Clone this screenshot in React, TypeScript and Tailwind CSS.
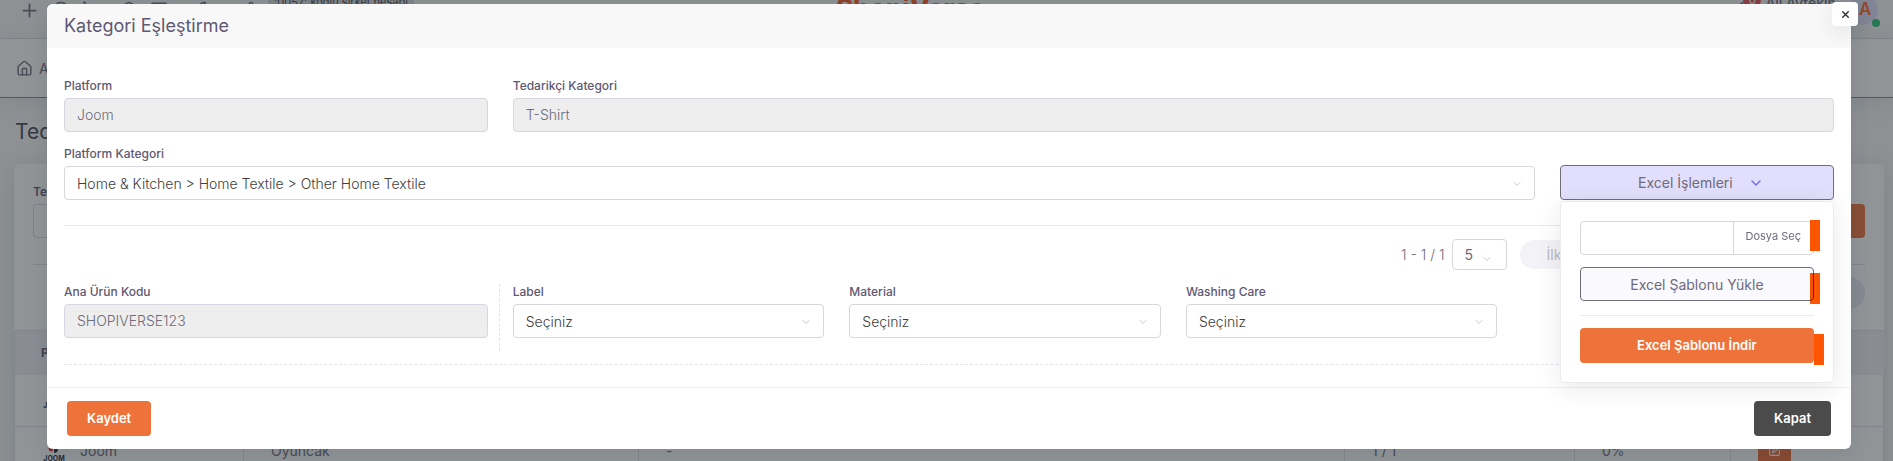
import type { ReactNode } from "react";
import {
  Bell,
  ChevronDown,
  CircleUser,
  Home,
  Monitor,
  Package,
  Plus,
  Settings,
  ShoppingCart,
  SquarePen,
  Wrench,
  X,
} from "lucide-react";

const box = "h-[34px] w-full rounded border border-[#d8d6de] px-3 text-[14px] font-light";

function Label({ id, children }: { id: string; children: ReactNode }) {
  return (
    <label htmlFor={id} className="mb-1 block text-[12px] leading-4 font-medium text-[#5e5873]">
      {children}
    </label>
  );
}

function ReadOnly({ id, label, value }: { id: string; label: string; value: string }) {
  return (
    <div>
      <Label id={id}>{label}</Label>
      <input id={id} disabled defaultValue={value} className={`${box} bg-[#eeeeee] pb-0.5 text-[#6e6b7b]`} />
    </div>
  );
}

function Select({ id, label, value }: { id: string; label: string; value: string }) {
  return (
    <div>
      <Label id={id}>{label}</Label>
      <div className="relative">
        <select id={id} className={`${box} appearance-none bg-white text-[#404040]`}>
          <option>{value}</option>
        </select>
        <ChevronDown className="pointer-events-none absolute top-3 right-3 size-3 text-[#c9c9d0]" />
      </div>
    </div>
  );
}

function JoomLogo() {
  return (
    <svg viewBox="0 0 24 24" className="size-6" aria-hidden="true">
      <circle cx="9" cy="10" r="2.4" fill="#ea2f3b" />
      <path d="M12 6h4v4c0 2.500-1.500 4-4 4z" fill="#2b2b40" />
      <text x="12" y="22" textAnchor="middle" fontSize="7" fontWeight="700" fill="#2b2b40">
        JOOM
      </text>
    </svg>
  );
}

function TopBar() {
  return (
    <header className="-mt-[18px] flex h-[57px] items-center justify-between border-b border-[#dfdfe4] bg-[#f8f8f8] pr-[15px] pl-[19px]">
      <div className="flex flex-1 items-center gap-3">
        <Plus className="size-[21px]" />
        <CircleUser className="size-[18px]" />
        <ShoppingCart className="size-[18px]" />
        <Package className="ml-2 size-[18px]" />
        <Monitor className="size-[18px]" />
        <Wrench className="ml-3 size-[18px]" />
        <Settings className="ml-5 size-[18px]" />
        <span className="mb-4 -ml-1 rounded bg-[#dcdce0] px-1.5 text-[11px] leading-6 text-[#4b4b4b]">
          '0057' kodlu şirket hesabı
        </span>
      </div>
      <span className="mr-[76px] mb-1 text-[26px] leading-8 font-extrabold text-[#ff5a1f]">ShopiVerse</span>
      <div className="flex flex-1 items-center justify-end gap-3">
        <span className="relative">
          <Bell className="size-[18px]" />
          <span className="absolute -top-2.5 -right-2 size-[18px] rounded-full bg-[#ea5455] text-center text-[11px] leading-[18px] font-medium text-white">
            0
          </span>
        </span>
        <span className="mb-4 text-[14px] font-medium">Ali Aytekin</span>
        <span className="relative flex size-[30px] items-center justify-center rounded-full bg-[#e3e0fb] pr-2 text-[17px] font-semibold text-[#ff6a2b]">
          AA
          <span className="absolute -right-0.5 -bottom-0.5 size-2 rounded-full bg-[#28c76f]" />
        </span>
      </div>
    </header>
  );
}

const cell = "h-[52px] border-r border-b border-[#e3e1e9] px-[27px] pb-1 text-left";

function Page() {
  return (
    <div aria-hidden="true" className="h-full overflow-hidden bg-[#f8f8f8] text-[#6e6b7b]">
      <TopBar />
      <nav className="flex h-[59px] items-center gap-1.5 border-b border-[#f0622a] bg-white px-4 shadow-[0_4px_24px_rgba(34,41,47,0.1)]">
        <Home className="size-[17px]" />
        <a href="#ana-sayfa" tabIndex={-1} className="text-[14px]">Ana Sayfa</a>
      </nav>
      <h2 className="mt-5 ml-[15px] text-[21px] leading-7 text-[#4b4b5a]">Tedarikçi Kategori</h2>
      <section className="mt-[18px] mr-[9px] ml-3.5 rounded-md bg-white shadow-[0_4px_24px_rgba(34,41,47,0.14)]">
        <div className="px-[19px] pt-5">
          <span className="mb-1 block text-[12px] leading-4 font-semibold text-[#5e5873]">Tedarikçi</span>
          <div className="flex h-[34px] justify-between">
            <span className="w-96 rounded border border-[#d8d6de]" />
            <span className="w-40 rounded bg-[#ee733a]" />
          </div>
          <div className="mt-[26px] flex h-[66px] items-start justify-end border-t border-[#dfdfe4] pt-3">
            <span className="h-8 w-40 rounded-full bg-[#e9e8f2]" />
          </div>
        </div>
        <table className="w-full table-fixed border-collapse border-t border-l border-[#e3e1e9] text-[14px]">
          <thead className="bg-[#f0eff5] text-[12px] text-[#5e5873]">
            <tr>
              <th className="h-11 w-[229px] px-[26px] text-left">Platform</th>
              <th className="w-[395px]" />
              <th />
              <th className="w-[230px]" />
              <th className="w-[156px]" />
              <th className="w-[153px]" />
            </tr>
          </thead>
          <tbody>
            {["Oyuncak", "Oyuncak"].map((category, index) => (
              <tr key={index}>
                <td className={cell}>
                  <span className="flex items-center gap-3.5">
                    <JoomLogo />
                    Joom
                  </span>
                </td>
                <td className={cell}>{category}</td>
                <td className={cell}>-</td>
                <td className={cell}>1 / 1</td>
                <td className={cell}>0%</td>
                <td className={cell}>
                  <span className="flex size-[33px] items-center justify-center rounded bg-[#ee6a35] text-white">
                    <SquarePen className="size-[13px]" />
                  </span>
                </td>
              </tr>
            ))}
          </tbody>
        </table>
      </section>
    </div>
  );
}

function ExcelMenu() {
  return (
    <div className="absolute top-full right-0 left-0 z-10 mt-px rounded-[5px] border border-[#ebebef] bg-white px-[19px] pt-[19px] pb-[19px] shadow-[0_5px_25px_rgba(34,41,47,0.1)]">
      <div className="relative flex h-[34px] rounded border border-[#d8d6de] focus-within:border-[#7367f0]">
        <input aria-label="Dosya" className="min-w-0 flex-1 rounded px-3 text-[14px]" />
        <button type="button" className="border-l border-[#d8d6de] px-3 pb-1 text-[11px] text-[#6e6b7b]">
          Dosya Seç
        </button>
        <span className="absolute -top-0.5 -right-[7px] h-[31px] w-2.5 bg-[#ff5500]" />
      </div>
      <div className="relative mt-3">
        <button
          type="button"
          className="h-[34px] w-full rounded border border-[#6e6b7b] bg-[#faf9fe] text-[14px] text-[#6e6b7b]"
        >
          Excel Şablonu Yükle
        </button>
        <span className="absolute top-1.5 -right-1.5 h-[31px] w-2.5 bg-[#ff5500] mix-blend-multiply" />
      </div>
      <hr className="mt-3.5 border-[#ebe9f1]" />
      <div className="relative mt-3">
        <button type="button" className="h-[35px] w-full rounded bg-[#ee733a] text-[13px] font-semibold text-white">
          Excel Şablonu İndir
        </button>
        <span className="absolute top-1.5 -right-2.5 h-[31px] w-2.5 bg-[#ff5500]" />
      </div>
    </div>
  );
}

function CategoryDialog() {
  return (
    <div
      role="dialog"
      aria-labelledby="dialog-title"
      className="relative rounded-md bg-white shadow-[0_5px_20px_rgba(34,41,47,0.1)]"
    >
      <header className="flex h-11 items-center rounded-t-md bg-[#f8f8f8] px-[17px]">
        <h1 id="dialog-title" className="text-[18px] leading-6 text-[#5e5873]">
          Kategori Eşleştirme
        </h1>
      </header>
      <button
        type="button"
        aria-label="Kapat"
        className="absolute -top-0.5 -right-[7px] flex h-6 w-[26px] items-center justify-center rounded bg-white text-[#2b2b2b] shadow-[0_5px_20px_rgba(34,41,47,0.1)]"
      >
        <X className="size-[11px]" strokeWidth={3} />
      </button>

      <div className="px-[17px] pt-[30px] pb-[22px]">
        <div className="grid grid-cols-12 gap-x-[25px] gap-y-3.5">
          <div className="col-span-3">
            <ReadOnly id="platform" label="Platform" value="Joom" />
          </div>
          <div className="col-span-9">
            <ReadOnly id="supplier-category" label="Tedarikçi Kategori" value="T-Shirt" />
          </div>
          <div className="col-span-10">
            <Select
              id="platform-category"
              label="Platform Kategori"
              value="Home & Kitchen > Home Textile > Other Home Textile"
            />
          </div>
          <div className="relative col-span-2 self-end">
            <button
              type="button"
              aria-expanded="true"
              className="flex h-[35px] w-full items-center justify-center gap-[15px] rounded border border-[#6e6b7b] bg-[#e2dffc] pl-2 text-[14px] text-[#6e6b7b]"
            >
              Excel İşlemleri
              <ChevronDown className="size-4 text-[#7367f0]" />
            </button>
            <ExcelMenu />
          </div>
        </div>

        <div className="mt-[25px] flex items-center border-t border-[#ebe9f1] pt-[13px] pl-[1337px] text-[14px] font-light text-[#6e6b7b] max-[1700px]:pl-0">
          <span className="mr-[7px] whitespace-nowrap">1 - 1 / 1</span>
          <div className="relative mr-[13px]">
            <select
              aria-label="Sayfa boyutu"
              className="h-[31px] w-[55px] appearance-none rounded border border-[#d8d6de] bg-white pl-3 font-normal"
            >
              <option>5</option>
            </select>
            <ChevronDown className="pointer-events-none absolute top-3.5 right-3.5 size-3 text-[#c9c9d0]" />
          </div>
          <button type="button" className="h-[29px] flex-1 rounded-full bg-[#f3f2f7] pl-[27px] text-left font-normal text-[#b9b9c3]">
            İlk
          </button>
        </div>

        <div className="mt-3.5 grid grid-cols-12 gap-x-[25px] border-b border-dashed border-[#e4e2ea] pb-[13px]">
          <div className="relative col-span-3 pb-[13px]">
            <ReadOnly id="product-code" label="Ana Ürün Kodu" value="SHOPIVERSE123" />
            <span className="absolute top-0 -right-3 h-full border-r border-dashed border-[#e4e2ea]" />
          </div>
          <div className="col-span-9 grid grid-cols-4 gap-x-[25px]">
            <Select id="label" label="Label" value="Seçiniz" />
            <Select id="material" label="Material" value="Seçiniz" />
            <Select id="washing-care" label="Washing Care" value="Seçiniz" />
          </div>
        </div>
      </div>

      <footer className="flex justify-between border-t border-[#f0f0f3] px-5 py-[13px] text-[13px] font-semibold text-white">
        <button type="button" className="h-[35px] rounded bg-[#ee733a] px-5">
          Kaydet
        </button>
        <button type="button" className="h-[35px] rounded bg-[#4b4b4b] px-5">
          Kapat
        </button>
      </footer>
    </div>
  );
}

export default function App() {
  return (
    <div className="relative h-screen overflow-hidden font-['Inter',sans-serif]">
      <Page />
      <div className="absolute inset-0 bg-[#22292f]/50 pt-1 pr-[42px] pl-[47px]">
        <CategoryDialog />
      </div>
    </div>
  );
}
